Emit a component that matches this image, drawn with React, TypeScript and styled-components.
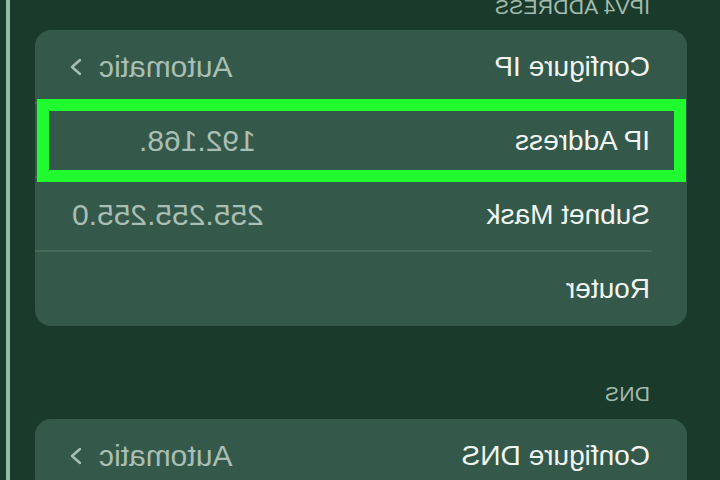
import React from 'react';
import styled, { createGlobalStyle } from 'styled-components';

const GlobalStyle = createGlobalStyle`
    html, body {
        margin: 0;
        padding: 0;
        background: #1a3a2b;
    }
    body {
        font-family: "Liberation Sans", Arial, Helvetica, sans-serif;
        -webkit-font-smoothing: antialiased;
    }
`;

// the whole screen is shown in its mirrored form
const Screen = styled.div`
    display: flex;
    width: 720px;
    height: 480px;
    overflow: hidden;
    background: #1a3a2b;
    transform: scaleX(-1);
`;

const Content = styled.div`
    flex: 1;
    display: flex;
    flex-direction: column;
    padding: 0 25px 0 33px;
`;

const Rail = styled.div`
    width: 4px;
    margin-right: 6px;
    background: #93bba4;
`;

const SectionLabel = styled.div<{ $first?: boolean }>`
    margin: ${p => (p.$first ? '-5px' : '56px')} 0 ${p => (p.$first ? '11px' : '13px')} 37px;
    font-size: 21px;
    line-height: 24px;
    color: #a2bcae;
    letter-spacing: 0.3px;
`;

const Card = styled.div`
    display: flex;
    flex-direction: column;
    background: #34584a;
    border-radius: 16px;
    flex-shrink: 0;
`;

const Row = styled.div<{ $last?: boolean }>`
    position: relative;
    display: flex;
    align-items: center;
    height: 74px;
    padding: 0 37px 0 37px;
    font-size: 28px;

    &::after {
        content: '';
        display: ${p => (p.$last ? 'none' : 'block')};
        position: absolute;
        left: 35px;
        right: 0;
        bottom: 0;
        height: 2px;
        background: #466b5b;
    }
`;

const Label = styled.span`
    flex: 1;
    color: #f1f5f2;
`;

const Value = styled.span<{ $inset?: number }>`
    color: #a9bfb3;
    font-size: 30px;
    margin-right: ${p => p.$inset ?? 0}px;
`;

const Chevron = styled.svg`
    width: 12px;
    height: 18px;
    margin-left: 17px;
    margin-right: -2px;
`;

// marker drawn over a row
const Highlight = styled.div`
    position: absolute;
    top: -5px;
    bottom: -4px;
    left: 1px;
    right: 2px;
    border: 12px solid #1ffb2e;
    z-index: 1;
    pointer-events: none;
`;

const Arrow = () => (
    <Chevron viewBox="0 0 12 18">
        <polyline points="2,2 10,9 2,16" fill="none" stroke="#a9bfb3" strokeWidth="2.4" strokeLinecap="round" strokeLinejoin="round" />
    </Chevron>
);

export default function App() {
    return (
        <>
            <GlobalStyle />
            <Screen>
                <Content>
                    <SectionLabel $first>IPV4 ADDRESS</SectionLabel>
                    <Card>
                        <Row>
                            <Label>Configure IP</Label>
                            <Value>Automatic</Value>
                            <Arrow />
                        </Row>
                        <Row>
                            <Highlight />
                            <Label>IP Address</Label>
                            <Value $inset={67}>192.168.</Value>
                        </Row>
                        <Row>
                            <Label>Subnet Mask</Label>
                            <Value>255.255.255.0</Value>
                        </Row>
                        <Row $last>
                            <Label>Router</Label>
                        </Row>
                    </Card>
                    <SectionLabel>DNS</SectionLabel>
                    <Card>
                        <Row>
                            <Label>Configure DNS</Label>
                            <Value>Automatic</Value>
                            <Arrow />
                        </Row>
                    </Card>
                </Content>
                <Rail />
            </Screen>
        </>
    );
}
